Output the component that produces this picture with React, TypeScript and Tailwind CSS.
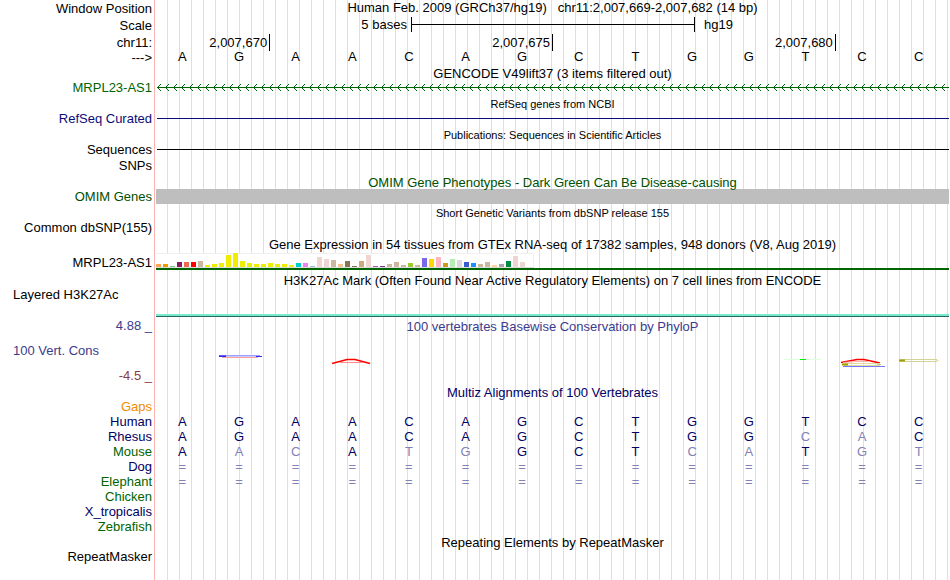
import React from "react";

type Label = { text: string; className: string };

const labels: Label[] = [
  { text: "Window Position", className: "mt-px" },
  { text: "Scale", className: "mt-0.5" },
  { text: "chr11:", className: "mt-0.5" },
  { text: "--->", className: "" },
  { text: "MRPL23-AS1", className: "mt-[15px] text-[#006400]" },
  { text: "RefSeq Curated", className: "mt-4 text-[#0c0c78]" },
  { text: "Sequences", className: "mt-4" },
  { text: "SNPs", className: "mt-px" },
  { text: "OMIM Genes", className: "mt-4 text-[#005000]" },
  { text: "Common dbSNP(155)", className: "mt-4" },
  { text: "MRPL23-AS1", className: "mt-5" },
  { text: "Layered H3K27Ac", className: "mt-[17px] self-start pl-[13px]" },
  { text: "4.88 _", className: "mt-4 text-[#3c3c8c]" },
  { text: "100 Vert. Cons", className: "mt-[10px] self-start pl-[13px] text-[#3c3c8c]" },
  { text: "-4.5 _", className: "mt-[10px] text-[#8c3c3c]" },
  { text: "Gaps", className: "mt-4 text-[#f08c00]" },
  { text: "Human", className: "text-[#000064]" },
  { text: "Rhesus", className: "text-[#000064]" },
  { text: "Mouse", className: "text-[#006400]" },
  { text: "Dog", className: "text-[#000064]" },
  { text: "Elephant", className: "text-[#006400]" },
  { text: "Chicken", className: "text-[#006400]" },
  { text: "X_tropicalis", className: "text-[#000064]" },
  { text: "Zebrafish", className: "text-[#006400]" },
  { text: "RepeatMasker", className: "mt-[15px]" },
];

const reference = "AGAACAGCTGGTCC";
const alignments = [
  { species: "Human", bases: "AGAACAGCTGGTCC" },
  { species: "Rhesus", bases: "AGAACAGCTGGCAC" },
  { species: "Mouse", bases: "AACATGGCTCATGT" },
  { species: "Dog", bases: "==============" },
  { species: "Elephant", bases: "==============" },
];

// Colour and height of the expression bar of each tissue.
const tissues: [string, number][] = [
  ["#FFA54F", 3], ["#EE9A00", 3], ["#8FBC8F", 1], ["#8B1C62", 5], ["#EE6A50", 5], ["#FF0000", 5],
  ["#CDB79E", 6], ["#EEEE00", 2], ["#EEEE00", 3], ["#EEEE00", 4], ["#EEEE00", 12], ["#EEEE00", 14],
  ["#EEEE00", 6], ["#EEEE00", 4], ["#EEEE00", 3], ["#EEEE00", 3], ["#EEEE00", 4], ["#EEEE00", 3],
  ["#EEEE00", 3], ["#EEEE00", 2], ["#00CDCD", 4], ["#EE82EE", 4], ["#9AC0CD", 1], ["#EED5D2", 10],
  ["#EED5D2", 8], ["#CDB79E", 7], ["#EEC591", 3], ["#8B7355", 6], ["#8B7355", 1], ["#CDAA7D", 6],
  ["#EED5D2", 12], ["#B452CD", 1], ["#7A378B", 1], ["#CDB79E", 3], ["#CDB79E", 5], ["#CDB79E", 2],
  ["#9ACD32", 4], ["#CDB79E", 2], ["#7A67EE", 9], ["#FFD700", 8], ["#FFB6C1", 10], ["#CD9B1D", 4],
  ["#B4EEB4", 8], ["#D9D9D9", 7], ["#3A5FCD", 5], ["#1E90FF", 4], ["#CDB79E", 3], ["#CDB79E", 5],
  ["#FFD39B", 2], ["#A6A6A6", 3], ["#008B45", 6], ["#EED5D2", 11], ["#EED5D2", 5], ["#FF00FF", 0],
];

function Bases({ rows, label }: { rows: { species: string; bases: string }[]; label: string }) {
  return (
    <table aria-label={label} className="w-full table-fixed border-collapse text-center">
      <tbody>
        {rows.map((row) => (
          <tr key={row.species} className="h-[15px]">
            {row.bases.split("").map((base, i) => (
              <td
                key={i}
                className={
                  "p-0 pr-1 " +
                  (row.species === "hg19" ? "text-black" : base === reference[i] ? "text-[#000064]" : "text-[#8282b4]")
                }
              >
                {base}
              </td>
            ))}
          </tr>
        ))}
      </tbody>
    </table>
  );
}

function Title({ children, className }: { children: React.ReactNode; className: string }) {
  return <h2 className={"text-center whitespace-pre " + className}>{children}</h2>;
}

function Transcript() {
  return (
    <svg className="mt-[3px] block h-[7px] w-full" shapeRendering="crispEdges" aria-hidden="true">
      <defs>
        <pattern id="strand" width="8" height="7" patternUnits="userSpaceOnUse">
          <path
            d="M2 2h1v1h-1zM3 1h1v1h-1zM2 4h1v1h-1zM3 5h1v1h-1zM4 0h1v1h-1zM4 6h1v1h-1z"
            fill="#006400"
          />
        </pattern>
      </defs>
      <rect width="100%" height="7" fill="url(#strand)" />
      <rect x="1" y="3" width="100%" height="1" fill="#006400" />
    </svg>
  );
}

function Conservation() {
  return (
    <svg className="mt-4 block h-5 w-full" viewBox="0 0 793 20" preserveAspectRatio="none" aria-hidden="true">
      <g fill="none">
        <path d="M65 5.5H104" stroke="#a0a0ff" />
        <path d="M63 6.5H70M100 6.5H106" stroke="#2828ff" />
        <path d="M70 6.5H100" stroke="#c8c8ff" />
        <path d="M66 7.5H102" stroke="#ffa0a0" />
        <path d="M63 5.5H70" stroke="#6464ff" />
        <path d="M176 13.5L191 9.5H199L214 13.5" stroke="#ff0000" strokeWidth="1.5" />
        <path d="M184 12.5H207" stroke="#ff8c8c" />
        <path d="M628 9.5H665" stroke="#dcffdc" />
        <path d="M644 9.5H650" stroke="#00f000" />
        <path d="M685 12.5L701 9.5H708L724 13" stroke="#ff0000" strokeWidth="1.5" />
        <path d="M687 12.5L701 11.5H714" stroke="#ffb4a0" />
        <path d="M688 13.5H724M688 15.5H724" stroke="#dcdca0" />
        <path d="M686 14.5H692" stroke="#a0a000" strokeWidth="2" />
        <path d="M721 14.5H725" stroke="#c8c878" />
        <path d="M687 16.5H729" stroke="#7878ff" />
        <path d="M744 9.5H781M744 11.5H781" stroke="#d2d296" />
        <path d="M743 10.5H749" stroke="#a0a000" strokeWidth="2" />
        <path d="M779 10.5H783" stroke="#e6e6be" />
      </g>
    </svg>
  );
}

export default function App() {
  return (
    <main className="flex min-h-screen bg-white font-['Liberation_Sans',Arial,sans-serif] text-[13px] leading-[15px] text-black">
      <div className="flex w-[154px] shrink-0 flex-col items-end pr-0.5">
        {labels.map((label, i) => (
          <div key={i} className={"whitespace-nowrap " + label.className}>
            {label.text}
          </div>
        ))}
      </div>
      <div className="min-w-0 flex-1 border-l border-[#ffb4b4] pr-px pl-px">
        <div className="h-full bg-[repeating-linear-gradient(to_right,transparent_0px_11px,#dcdcf8_11px_12px)]">
          <h1 className="text-center whitespace-pre">
            {"Human Feb. 2009 (GRCh37/hg19)   chr11:2,007,669-2,007,682 (14 bp)"}
          </h1>
          <div className="mt-0.5 grid grid-cols-[9fr_10fr_9fr]">
            <div className="pr-1 text-right">5 bases</div>
            <div className="flex items-center border-l border-black">
              <div className="h-px w-full bg-black" />
            </div>
            <div className="border-l border-black pl-[9px]">hg19</div>
          </div>
          <div className="mt-0.5 grid h-[15px] grid-cols-[2fr_5fr_5fr_2fr] pr-px text-right leading-[17px]">
            <div className="pr-0.5">2,007,670</div>
            <div className="border-l border-black pr-0.5">2,007,675</div>
            <div className="border-l border-black pr-0.5">2,007,680</div>
            <div className="border-l border-black" />
          </div>
          <Bases label="Reference bases" rows={[{ species: "hg19", bases: reference }]} />

          <Title className="mt-0.5">GENCODE V49lift37 (3 items filtered out)</Title>
          <Transcript />

          <Title className="mt-[7px] text-[11px] leading-[13px]">RefSeq genes from NCBI</Title>
          <div className="mt-[7px] ml-px h-px bg-[#0c0c78]" />

          <Title className="mt-[10px] text-[11px] leading-[13px]">Publications: Sequences in Scientific Articles</Title>
          <div className="mt-[7px] ml-px h-px bg-black" />

          <Title className="mt-[25px] h-[14px] text-[#005000]">
            OMIM Gene Phenotypes - Dark Green Can Be Disease-causing
          </Title>
          <div className="h-[15px] bg-[#bebebe]" />

          <Title className="mt-[3px] text-[11px] leading-[13px]">Short Genetic Variants from dbSNP release 155</Title>

          <Title className="mt-[17px]">
            Gene Expression in 54 tissues from GTEx RNA-seq of 17382 samples, 948 donors (V8, Aug 2019)
          </Title>
          <div className="mt-px border-b-2 border-[#006400]">
            <div className="flex h-[15px] w-fit items-end gap-0.5 border-b border-[#dcdcdc] bg-white pr-0.5 shadow-[inset_0_1px_#f0f0f0,inset_-1px_0_#f0f0f0]">
              {tissues.map(([color, height], i) => (
                <div key={i} className="w-[5px]" style={{ height, backgroundColor: color }} />
              ))}
            </div>
          </div>

          <Title className="mt-[3px]">H3K27Ac Mark (Often Found Near Active Regulatory Elements) on 7 cell lines from ENCODE</Title>
          <div className="mt-[26px] h-[3px] border-b border-[#286464] bg-[#78ebcd]" />

          <Title className="mt-0.5 text-[#3c3c8c]">100 vertebrates Basewise Conservation by PhyloP</Title>
          <Conservation />

          <Title className="mt-[15px] text-[#000064]">Multiz Alignments of 100 Vertebrates</Title>
          <div className="mt-[14px]">
            <Bases label="Multiz alignments" rows={alignments} />
          </div>

          <Title className="mt-[46px]">Repeating Elements by RepeatMasker</Title>
        </div>
      </div>
    </main>
  );
}
